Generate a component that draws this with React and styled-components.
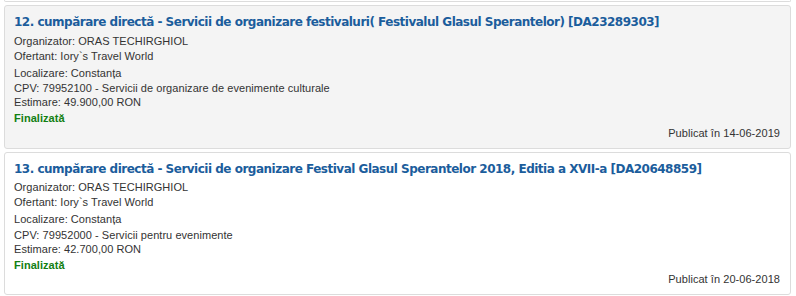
import React from 'react';
import styled, { createGlobalStyle } from 'styled-components';

const GlobalStyle = createGlobalStyle`
  body {
    margin: 0;
    background: #fff;
    font-family: "Liberation Sans", Arial, sans-serif;
  }
`;

const items = [
  {
    nr: 12,
    title: 'cumpărare directă - Servicii de organizare festivaluri( Festivalul Glasul Sperantelor) [DA23289303]',
    cpv: '79952100 - Servicii de organizare de evenimente culturale',
    estimare: '49.900,00 RON',
    date: '14-06-2019',
    active: true,
  },
  {
    nr: 13,
    title: 'cumpărare directă - Servicii de organizare Festival Glasul Sperantelor 2018, Editia a XVII-a [DA20648859]',
    cpv: '79952000 - Servicii pentru evenimente',
    estimare: '42.700,00 RON',
    date: '20-06-2018',
  },
];

const App = () => {
  return (
    <List>
      <GlobalStyle />
      <PrevCard />
      {items.map((item) => (
        <Card key={item.nr} $active={item.active}>
          <Title href='#'>
            {item.nr}. {item.title}
          </Title>
          <Line $top={2.5}>Organizator: ORAS TECHIRGHIOL</Line>
          <Line $top={0}>Ofertant: Iory`s Travel World</Line>
          <Line $top={2}>Localizare: Constanța</Line>
          <Line $top={0.5}>CPV: {item.cpv}</Line>
          <Line $top={-1}>Estimare: {item.estimare}</Line>
          <Status>Finalizată</Status>
          <Published>Publicat în {item.date}</Published>
        </Card>
      ))}
    </List>
  );
};

const List = styled.div`
  padding: 0 5px 0 4px;
  display: flex;
  flex-direction: column;
  gap: 3px;
`;

const PrevCard = styled.div`
  height: 1px;
  border: 1px solid #dcdcdc;
  border-top: none;
  border-radius: 0 0 3px 3px;
`;

const Card = styled.div`
  border: 1px solid #dcdcdc;
  border-radius: 3px;
  background: ${(p) => (p.$active ? '#f4f4f4' : '#fff')};
  padding: 7px 10px 7px 9px;
  color: #333;
  font-size: 11px;
  letter-spacing: 0.05px;
`;

const Title = styled.a`
  display: block;
  font-family: "DejaVu Sans", Verdana, sans-serif;
  font-size: 12px;
  font-weight: bold;
  line-height: 18px;
  letter-spacing: -0.5px;
  color: #1b5d9c;
  text-decoration: none;
`;

const Line = styled.div`
  line-height: 15px;
  margin-top: ${(p) => p.$top}px;
`;

const Status = styled.div`
  line-height: 15px;
  margin-top: 1px;
  font-weight: bold;
  color: #128012;
`;

const Published = styled.div`
  line-height: 15px;
  margin-top: -0.5px;
  text-align: right;
`;

export default App;
